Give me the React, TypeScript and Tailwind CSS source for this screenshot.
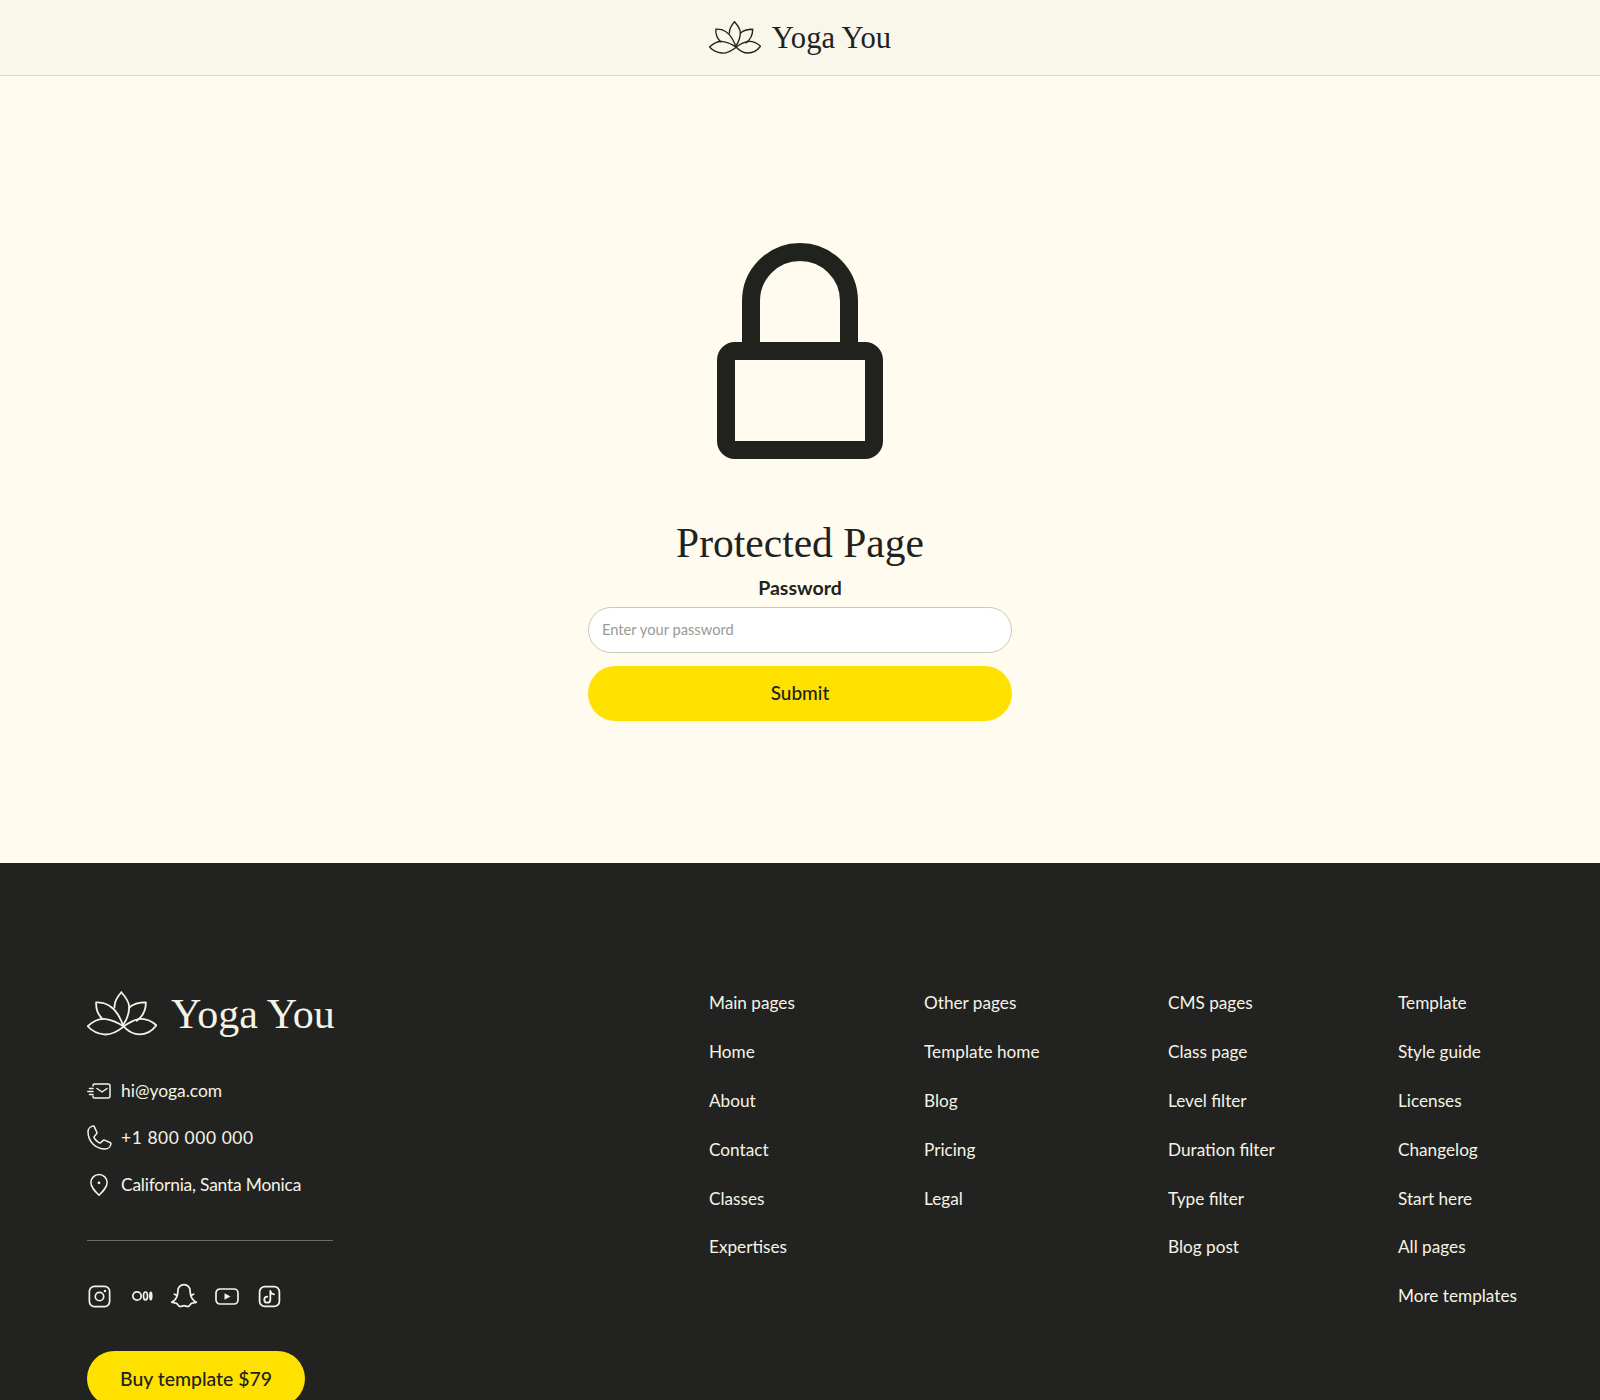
import { PiInstagramLogo, PiPhoneLight, PiSnapchatLogo } from "react-icons/pi";

const columns = [
  { width: "w-[215px]", links: ["Main pages", "Home", "About", "Contact", "Classes", "Expertises"] },
  { width: "w-[244px]", links: ["Other pages", "Template home", "Blog", "Pricing", "Legal"] },
  { width: "w-[230px]", links: ["CMS pages", "Class page", "Level filter", "Duration filter", "Type filter", "Blog post"] },
  { width: "w-[115px]", links: ["Template", "Style guide", "Licenses", "Changelog", "Start here", "All pages", "More templates"] },
];

function Lotus({ className }: { className: string }) {
  return (
    <svg viewBox="20 28 214 136" fill="none" stroke="currentColor" strokeWidth="5.5" strokeLinejoin="round" strokeLinecap="round" className={className}>
      <path d="M125 31C110 48 103 62 104 78M125 31C140 48 150 62 149 78C148 100 140 118 130 132" />
      <path d="M48 62C75 60 100 75 115 100C122 112 127 122 131 134M48 62C47 82 53 100 68 113" />
      <path d="M200 62C178 62 160 68 149 78M200 62C200 85 190 105 172 118" />
      <path d="M22 135C40 118 60 110 78 113C100 116 118 126 132 136C112 152 92 162 72 160C52 158 36 150 22 135Z" />
      <path d="M232 132C214 116 196 110 178 113C160 116 145 126 132 136C146 150 162 160 180 160C200 160 220 148 232 132Z" />
    </svg>
  );
}

function LockIcon() {
  return (
    <svg viewBox="0 0 166 216" fill="none" stroke="#21221d" strokeWidth="18" className="h-[216px] w-[166px]">
      <path d="M34 108V58a49 49 0 0 1 98 0V108" />
      <rect x="9" y="108" width="148" height="99" rx="9" />
    </svg>
  );
}

function MailIcon() {
  return (
    <svg viewBox="0 0 24 16" fill="none" stroke="currentColor" strokeWidth="1.5" strokeLinecap="round" strokeLinejoin="round" className="h-4 w-6 shrink-0">
      <path d="M6 3V2.500A1.500 1.500 0 0 1 7.500 1H21a2 2 0 0 1 2 2v10a2 2 0 0 1-2 2H7.500A1.500 1.500 0 0 1 6 13.500V13" />
      <path d="M10 5.500L15 9l5-3.500" />
      <path d="M2.500 5.500H6M0.800 8.500H6M2.500 11.500H6" />
    </svg>
  );
}

function PinIcon() {
  return (
    <svg viewBox="0 0 24 24" fill="none" stroke="currentColor" strokeWidth="1.4" className="h-[26px] w-[26px] shrink-0">
      <path d="M12 21.500C8 17.500 4.500 14 4.500 9.800a7.500 7.500 0 0 1 15 0C19.500 14 16 17.500 12 21.500Z" strokeLinejoin="round" />
      <circle cx="12" cy="10" r="1.300" fill="currentColor" stroke="none" />
    </svg>
  );
}

function MediumIcon() {
  return (
    <svg viewBox="0 0 24 24" fill="none" stroke="currentColor" strokeWidth="1.7" className="h-6 w-6 shrink-0">
      <circle cx="7" cy="12" r="4.200" />
      <ellipse cx="15.500" cy="12" rx="2" ry="4" />
      <ellipse cx="20.800" cy="12" rx="0.900" ry="3.600" />
    </svg>
  );
}

function YoutubeIcon() {
  return (
    <svg viewBox="0 0 24 17" className="h-[17px] w-6 shrink-0">
      <rect x="1" y="1" width="22" height="15" rx="4" fill="none" stroke="currentColor" strokeWidth="1.700" />
      <path d="M9.500 5.300L15.500 8.500L9.500 11.700Z" fill="currentColor" />
    </svg>
  );
}

function TiktokIcon() {
  return (
    <svg viewBox="0 0 24 24" fill="none" stroke="currentColor" strokeWidth="1.700" className="h-[25px] w-[25px] shrink-0">
      <rect x="2.500" y="2.500" width="19" height="19" rx="5" />
      <path d="M12.800 6.500V15a2.900 2.900 0 1 1-2.900-2.900M12.800 6.500c.3 1.900 1.600 3.200 3.600 3.400" strokeLinecap="round" />
    </svg>
  );
}

export default function App() {
  return (
    <div className="h-[1400px] overflow-hidden bg-[#fffcef] font-['Lato',sans-serif] text-[#21221d]">
      <header className="flex h-[76px] items-center justify-center gap-[11px] border-b border-[#d9d7c9] bg-[#f9f7ea]">
        <Lotus className="h-[33px] w-[52px]" />
        <span className="pt-[2px] font-['Liberation_Serif',serif] text-[30.6px] leading-none">Yoga You</span>
      </header>

      <main className="flex h-[787px] flex-col items-center pt-[167px]">
        <LockIcon />
        <h1 className="mt-[60px] font-['Liberation_Serif',serif] text-[41.5px] leading-[48px]">Protected Page</h1>
        <form className="mt-[9px] flex w-[424px] flex-col items-center">
          <label className="text-[19.5px] leading-6 font-bold">Password</label>
          <input
            type="password"
            placeholder="Enter your password"
            className="mt-[7px] h-[46px] w-full rounded-full border border-[#c9c8bf] bg-white px-[13px] pb-[2px] text-[14.7px] placeholder:text-[#9a9a96]"
          />
          <button type="button" className="mt-[13px] h-[55px] w-full rounded-full bg-[#ffe100] text-[19px] font-medium">
            Submit
          </button>
        </form>
      </main>

      <footer className="flex justify-between bg-[#222320] px-[87px] pt-[126px] text-[#f5f3e6]">
        <div className="w-[246px]">
          <div className="flex h-[48px] items-center gap-[14px] whitespace-nowrap">
            <Lotus className="h-[45px] w-[70px] shrink-0" />
            <span className="pt-[1px] font-['Liberation_Serif',serif] text-[42px] leading-[46px]">Yoga You</span>
          </div>
          <div className="mt-[40px] flex flex-col gap-[20px] text-[17.4px] leading-[27px]">
            <div className="flex items-center gap-[10px]">
              <span className="flex h-6 w-6 items-center justify-center">
                <MailIcon />
              </span>
              <span>hi@yoga.com</span>
            </div>
            <div className="flex items-center gap-[10px]">
              <span className="flex h-6 w-6 items-center justify-center">
                <PiPhoneLight className="h-8 w-8 shrink-0" />
              </span>
              <span className="tracking-[0.6px]">+1 800 000 000</span>
            </div>
            <div className="flex items-center gap-[10px]">
              <span className="flex h-6 w-6 items-center justify-center">
                <PinIcon />
              </span>
              <span className="tracking-[-0.2px]">California, Santa Monica</span>
            </div>
          </div>
          <div className="mt-[42px] border-t border-[#6a6a66]" />
          <div className="mt-[43px] flex gap-[18.5px]">
            <span className="flex h-6 w-6 items-center justify-center">
              <PiInstagramLogo className="h-[27px] w-[27px] shrink-0" />
            </span>
            <span className="flex h-6 w-6 items-center justify-center">
              <MediumIcon />
            </span>
            <span className="flex h-6 w-6 items-center justify-center">
              <PiSnapchatLogo className="h-7 w-7 shrink-0" />
            </span>
            <span className="flex h-6 w-6 items-center justify-center">
              <YoutubeIcon />
            </span>
            <span className="flex h-6 w-6 items-center justify-center">
              <TiktokIcon />
            </span>
          </div>
          <button type="button" className="mt-[43px] h-[55px] w-[218px] rounded-full bg-[#ffe100] text-[19.4px] font-medium text-[#21221d]">
            Buy template $79
          </button>
        </div>

        <nav className="flex text-[17.2px] leading-[27px]">
          {columns.map((col) => (
            <ul key={col.links[0]} className={`flex flex-col gap-[21.9px] ${col.width}`}>
              {col.links.map((link) => (
                <li key={link} className="whitespace-nowrap">{link}</li>
              ))}
            </ul>
          ))}
        </nav>
      </footer>
    </div>
  );
}
